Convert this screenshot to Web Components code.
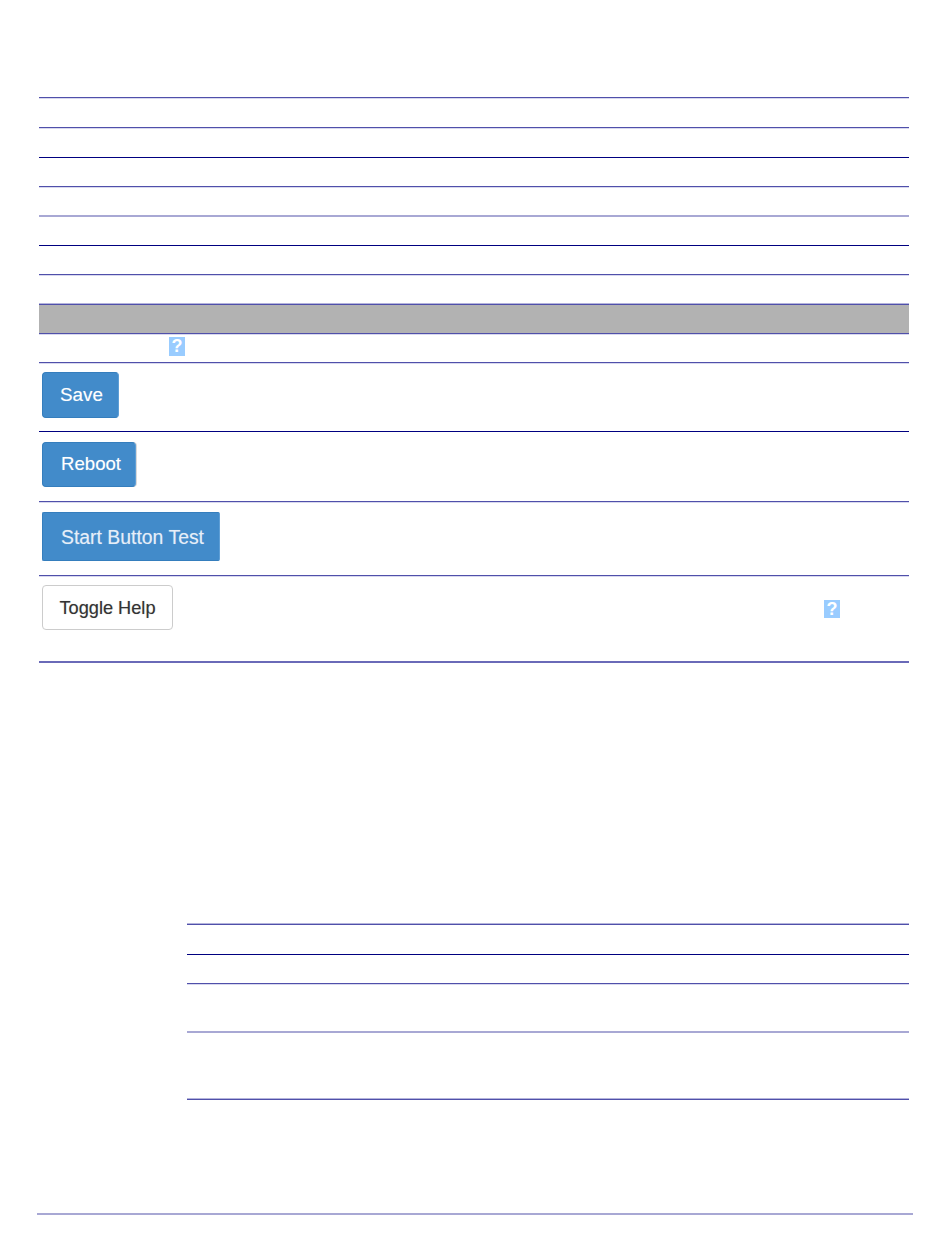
<!DOCTYPE html>
<html lang="en">
<head>
<meta charset="utf-8">
<title>Settings</title>
<style>
  html, body { margin: 0; background: #fff; }
  body { font-family: "Liberation Sans", Arial, sans-serif; }
</style>
</head>
<body>
<spec-page>
  <spec-table>
    <spec-row h="30" line="soft"></spec-row>
    <spec-row h="30" line="soft"></spec-row>
    <spec-row h="29" line="navy"></spec-row>
    <spec-row h="29" line="soft"></spec-row>
    <spec-row h="30" line="pale"></spec-row>
    <spec-row h="29" line="navy"></spec-row>
    <spec-row h="30" line="soft"></spec-row>
    <spec-row h="29" line="over" shade></spec-row>
    <spec-row h="29" line="soft"><help-icon style="margin:3px 0 0 130px"></help-icon></spec-row>
    <spec-row h="69" line="soft"><spec-button kind="primary" w="77" h="46" size="18.8" style="margin:9px 0 0 3px;padding-left:2px">Save</spec-button></spec-row>
    <spec-row h="70" line="navy"><spec-button kind="primary" w="94" h="45" size="18.6" edge style="margin:10px 0 0 3px;padding-left:4px;padding-bottom:2px">Reboot</spec-button></spec-row>
    <spec-row h="74" line="soft"><spec-button kind="primary" w="178" h="49" size="19.4" square style="margin:10px 0 0 3px;padding-left:3px;padding-top:2px">Start Button Test</spec-button></spec-row>
    <spec-row h="86" line="soft">
      <spec-button kind="default" w="131" h="45" size="18.2" style="margin:9px 0 0 3px;padding-top:2px">Toggle Help</spec-button>
      <help-icon style="margin:24px 0 0 651px;height:18px"></help-icon>
    </spec-row>
    <spec-row h="2" line="mid"></spec-row>
  </spec-table>

  <spec-table indent>
    <spec-row h="30" line="over"></spec-row>
    <spec-row h="29" line="navy"></spec-row>
    <spec-row h="48" line="soft"></spec-row>
    <spec-row h="68" line="pale"></spec-row>
    <spec-row h="1" line="over"></spec-row>
  </spec-table>

  <page-rule></page-rule>
</spec-page>

<script>
class SpecPage extends HTMLElement {
  constructor() {
    super();
    this.attachShadow({ mode: 'open' });
    this.shadowRoot.innerHTML = `
      <style>
        :host {
          display: flex;
          flex-direction: column;
          box-sizing: border-box;
          height: 1260px;
          padding-top: 97px;
        }
      </style>
      <slot></slot>
    `;
  }
}

class SpecTable extends HTMLElement {
  constructor() {
    super();
    this.attachShadow({ mode: 'open' });
    this.shadowRoot.innerHTML = `
      <style>
        :host {
          display: flex;
          flex-direction: column;
          margin: 0 41px 0 39px;
        }
        :host([indent]) {
          margin-top: 261px;
          margin-left: 187px;
        }
      </style>
      <slot></slot>
    `;
  }
}

class SpecRow extends HTMLElement {
  // colour of the line, then the faint pixel that sits under it (or over it)
  static lines = {
    soft: ['#5050aa', 'inset 0 1px 0 #d8d8ee'],
    navy: ['#000080', 'none'],
    pale: ['#a8a8d4', 'inset 0 1px 0 #a8a8d4'],
    mid: ['#6a6ab8', 'inset 0 1px 0 #6a6ab8'],
    over: ['#5050aa', '0 -1px 0 #b4b4dc']
  };

  constructor() {
    super();
    this.attachShadow({ mode: 'open' });
    this.shadowRoot.innerHTML = `
      <style>
        :host {
          display: flex;
          align-items: flex-start;
          box-sizing: border-box;
          border-top: 1px solid var(--line);
          box-shadow: var(--halo);
        }
        :host([shade]) {
          background: #b2b2b2;
        }
      </style>
      <slot></slot>
    `;
  }

  connectedCallback() {
    const line = SpecRow.lines[this.getAttribute('line')] || SpecRow.lines.soft;
    this.style.height = this.getAttribute('h') + 'px';
    this.style.setProperty('--line', line[0]);
    this.style.setProperty('--halo', line[1]);
  }
}

class SpecButton extends HTMLElement {
  constructor() {
    super();
    this.attachShadow({ mode: 'open' });
    this.shadowRoot.innerHTML = `
      <style>
        :host {
          display: inline-flex;
          align-items: center;
          justify-content: center;
          flex: none;
          box-sizing: border-box;
          border: 1px solid #357ebd;
          border-right-color: #5f9fd6;
          border-radius: 4px;
          background: #428bca;
          color: #fff;
          text-shadow: 0 0 1px rgba(255, 255, 255, 0.35);
        }
        :host([kind="default"]) {
          border-color: #ccc;
          background: #fff;
          color: #333;
          text-shadow: 0 0 1px rgba(51, 51, 51, 0.35);
        }
        :host([square]) {
          border-radius: 2px;
          color: #e6eef8;
        }
        :host([edge]) {
          box-shadow: 1px 0 0 #d9d9d9;
        }
      </style>
      <slot></slot>
    `;
  }

  connectedCallback() {
    this.style.width = this.getAttribute('w') + 'px';
    this.style.height = this.getAttribute('h') + 'px';
    this.style.fontSize = this.getAttribute('size') + 'px';
  }
}

class HelpIcon extends HTMLElement {
  constructor() {
    super();
    this.attachShadow({ mode: 'open' });
    this.shadowRoot.innerHTML = `
      <style>
        :host {
          display: inline-flex;
          align-items: center;
          justify-content: center;
          flex: none;
          width: 16px;
          height: 19px;
          background: #99ccff;
          color: #fff;
          font: bold 18px "Liberation Sans", Arial, sans-serif;
        }
      </style>
      ?
    `;
  }
}

class PageRule extends HTMLElement {
  constructor() {
    super();
    this.attachShadow({ mode: 'open' });
    this.shadowRoot.innerHTML = `
      <style>
        :host {
          display: block;
          height: 2px;
          margin: auto 37px 45px 37px;
          background: #a8a8d4;
        }
      </style>
    `;
  }
}

customElements.define('spec-page', SpecPage);
customElements.define('spec-table', SpecTable);
customElements.define('spec-row', SpecRow);
customElements.define('spec-button', SpecButton);
customElements.define('help-icon', HelpIcon);
customElements.define('page-rule', PageRule);
</script>
</body>
</html>
